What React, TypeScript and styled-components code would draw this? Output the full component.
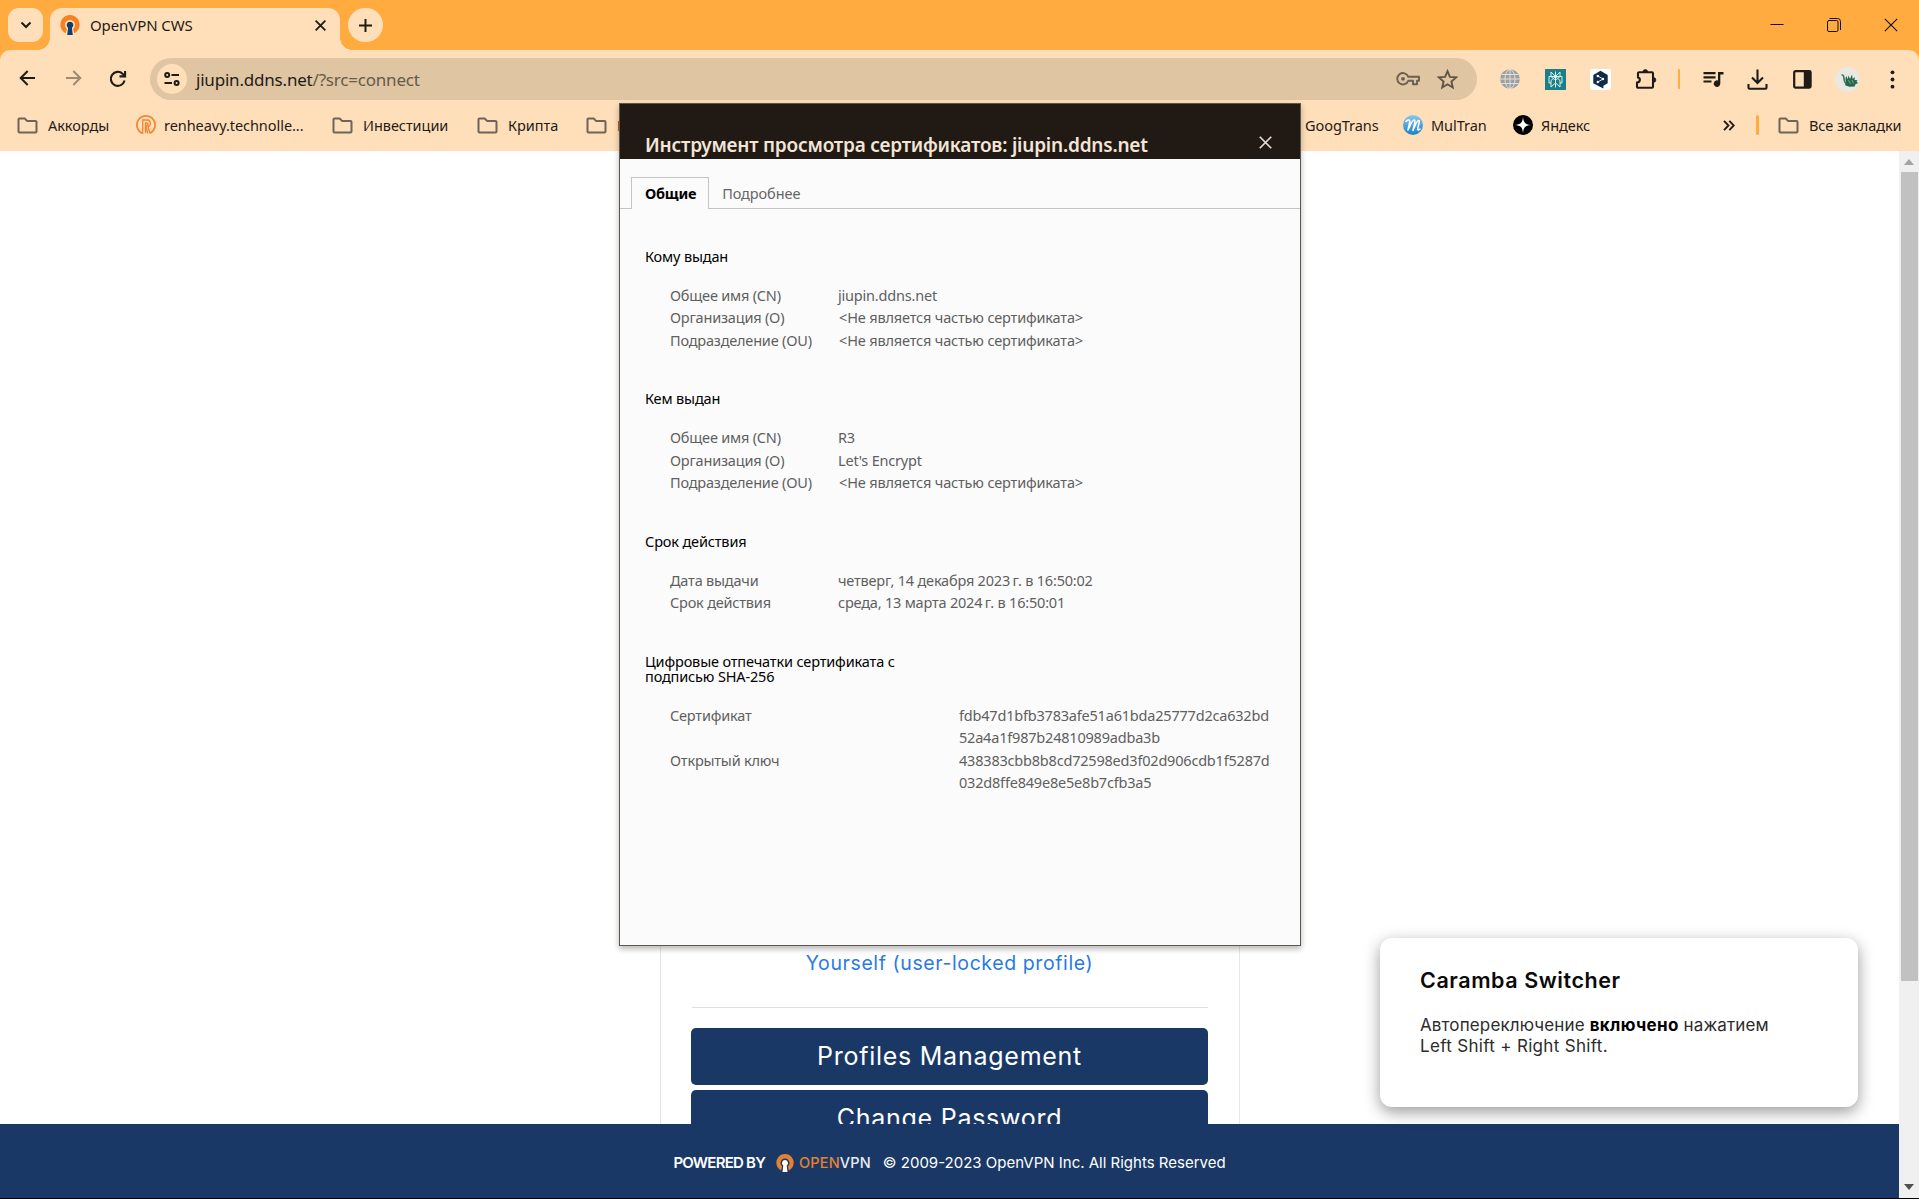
import React from "react";
import styled, { createGlobalStyle } from "styled-components";

const peach = "#ffdfb9";
const orange = "#ffab40";
const ink = "#1f1b17";
const navy = "#1a3866";

const GlobalStyle = createGlobalStyle`
  * { box-sizing: border-box; }
  body { margin: 0; background: #fff; font-family: "Noto Sans", "Open Sans", sans-serif; }
  svg { display: block; flex: none; }
`;

const Screen = styled.div`
  position: relative;
  width: 1919px;
  height: 1199px;
  overflow: hidden;
  display: flex;
  flex-direction: column;
  border-bottom: 1px solid #000;
`;

/* ---------- tab strip ---------- */

const TabStrip = styled.div`
  flex: none;
  display: flex;
  align-items: flex-start;
  height: 50px;
  padding: 8px 21px 0 8px;
  background: ${orange};
`;

const StripButton = styled.div<{ $round?: boolean }>`
  display: flex;
  align-items: center;
  justify-content: center;
  width: 35px;
  height: 34px;
  border-radius: ${(p) => (p.$round ? "17px" : "11px")};
  background: ${peach};
`;

const Tab = styled.div`
  position: relative;
  display: flex;
  align-items: center;
  width: 290px;
  height: 42px;
  margin: 0 8px 0 7px;
  padding: 0 14px 8px 10px;
  border-radius: 12px 12px 0 0;
  background: ${peach};

  &::before,
  &::after {
    content: "";
    position: absolute;
    bottom: 0;
    width: 12px;
    height: 12px;
  }
  &::before {
    left: -12px;
    background: radial-gradient(circle at 0 0, transparent 11.5px, ${peach} 12px);
  }
  &::after {
    right: -12px;
    background: radial-gradient(circle at 100% 0, transparent 11.5px, ${peach} 12px);
  }
`;

const TabTitle = styled.span`
  flex: 1;
  margin-left: 10px;
  font-size: 15px;
  letter-spacing: -0.1px;
  line-height: 20px;
  color: ${ink};
`;

const WindowButtons = styled.div`
  display: flex;
  align-items: center;
  gap: 43px;
  height: 33px;
  margin-left: auto;
`;

/* ---------- toolbar ---------- */

const ToolbarBack = styled.div`
  flex: none;
  background: ${orange};
`;

const Toolbar = styled.div`
  height: 101px;
  padding-top: 8px;
  border-radius: 10px 10px 0 0;
  background: ${peach};
`;

const NavRow = styled.div`
  display: flex;
  align-items: center;
  height: 42px;
  padding-left: 15px;
`;

const NavIcons = styled.div`
  display: flex;
  gap: 21px;
  width: 135px;
`;

const Omnibox = styled.div`
  display: flex;
  align-items: center;
  width: 1327px;
  height: 42px;
  padding: 0 19px 0 7px;
  border-radius: 21px;
  background: #dfc5a2;
`;

const SiteChip = styled.div`
  display: flex;
  align-items: center;
  justify-content: center;
  width: 30px;
  height: 30px;
  border-radius: 50%;
  background: ${peach};
`;

const Url = styled.span`
  flex: 1;
  margin-left: 9px;
  padding-top: 1px;
  font-size: 17px;
  line-height: 22px;
  letter-spacing: -0.2px;
  color: ${ink};
`;

const UrlPath = styled.span`
  color: #665a4a;
`;

const OmniIcons = styled.div`
  display: flex;
  align-items: center;
  gap: 17px;
`;

const Extensions = styled.div`
  display: flex;
  align-items: center;
  padding-left: 10.5px;
`;

const Slot = styled.div<{ $w?: number; $pad?: number }>`
  display: flex;
  align-items: center;
  justify-content: center;
  width: ${(p) => p.$w ?? 45}px;
  height: 30px;
  padding-left: ${(p) => p.$pad ?? 0}px;
`;

const Divider = styled.div<{ $w: number }>`
  width: ${(p) => p.$w}px;
  height: 20px;
  border-radius: 2px;
  background: ${orange};
`;

const BookmarkRow = styled.div`
  display: flex;
  align-items: center;
  height: 50px;
  padding-left: 17px;
`;

const Bookmark = styled.div<{ $w: number; $gap?: number }>`
  display: flex;
  align-items: center;
  flex: none;
  gap: ${(p) => p.$gap ?? 10}px;
  width: ${(p) => p.$w}px;
  font-size: 14.5px;
  line-height: 20px;
  letter-spacing: -0.05px;
  white-space: nowrap;
  color: ${ink};
`;

const BookmarkEnd = styled.div`
  display: flex;
  align-items: center;
  margin-left: 80px;
`;

/* ---------- web page ---------- */

const Content = styled.div`
  flex: 1;
  min-height: 0;
  display: flex;
`;

const Page = styled.main`
  flex: 1;
  display: flex;
  flex-direction: column;
  font-family: Inter, "Open Sans", sans-serif;
`;

const PageBody = styled.div`
  flex: 1;
  min-height: 0;
  overflow: hidden;
`;

const ProfileCard = styled.section`
  display: flex;
  flex-direction: column;
  align-items: center;
  width: 580px;
  height: 1100px;
  margin: 0 auto;
  padding: 797px 31px 0;
  border: 1px solid #e7e7e7;
  border-top: 0;
`;

const ProfileLink = styled.a`
  font-size: 19.5px;
  line-height: 30px;
  letter-spacing: 0.6px;
  color: #2a7ae4;
`;

const Rule = styled.hr`
  width: 100%;
  height: 1px;
  margin: 29px 0 20px;
  border: 0;
  background: #dfdfdf;
`;

const Action = styled.button`
  flex: none;
  width: 517px;
  height: 57px;
  margin: 0 0 5px;
  padding: 0 0 2px;
  border: 0;
  border-radius: 5px;
  background: ${navy};
  color: #fff;
  font-family: inherit;
  font-size: 25px;
  letter-spacing: 0.75px;
`;

const Footer = styled.footer`
  flex: none;
  display: flex;
  align-items: center;
  justify-content: center;
  height: 74px;
  padding-top: 3px;
  background: ${navy};
  color: #fff;
  font-size: 15px;
  line-height: 20px;
`;

const Powered = styled.span`
  margin-right: 11px;
  font-weight: 600;
  letter-spacing: -0.77px;
`;

const Brand = styled.span`
  margin: 0 12px 0 5px;
  font-size: 14.5px;
  font-weight: 500;
  letter-spacing: 0.15px;
  color: #e58132;
`;

const BrandTail = styled.span`
  color: #e8edf4;
`;

const Scrollbar = styled.div`
  display: flex;
  flex-direction: column;
  align-items: center;
  justify-content: space-between;
  width: 20px;
  padding: 8px 0 8px;
  background: #f0f0f0;
`;

const ScrollTop = styled.div`
  display: flex;
  flex-direction: column;
  align-items: center;
  gap: 7px;
`;

const ScrollThumb = styled.div`
  width: 17px;
  height: 809px;
  background: #c1c1c1;
`;

/* ---------- certificate dialog ---------- */

const Dialog = styled.section`
  position: absolute;
  left: 619px;
  top: 103px;
  width: 682px;
  height: 843px;
  border: 1px solid #5f564e;
  background: #fbfbfb;
  box-shadow: 0 3px 6px rgba(0, 0, 0, 0.28);
`;

const DialogHeader = styled.header`
  display: flex;
  align-items: flex-end;
  justify-content: space-between;
  height: 55px;
  padding: 0 28px 0 25px;
  background: #211a14;
  color: #f3e5d8;
`;

const DialogTitle = styled.h1`
  margin: 0;
  font-size: 19px;
  font-weight: 600;
  line-height: 27px;
  letter-spacing: -0.21px;
`;

const DialogClose = styled.div`
  margin-bottom: 10px;
`;

const Tabs = styled.nav`
  display: flex;
  height: 50px;
  padding: 18px 0 0 11px;
  box-shadow: inset 0 -1px #c4c4c4;
`;

const DialogTab = styled.div<{ $active?: boolean }>`
  height: 32px;
  padding: 4px 12px 0 ${(p) => (p.$active ? 13 : 12)}px;
  border: 1px solid ${(p) => (p.$active ? "#c4c4c4" : "transparent")};
  border-bottom: 0;
  background: ${(p) => (p.$active ? "#fbfbfb" : "transparent")};
  color: ${(p) => (p.$active ? "#000" : "#666")};
  font-size: 14.5px;
  line-height: 22px;
  font-weight: ${(p) => (p.$active ? 700 : 400)};
  letter-spacing: ${(p) => (p.$active ? -0.25 : -0.08)}px;
`;

const Details = styled.div`
  padding: 39.6px 0 0 25px;
  font-size: 14.5px;
  letter-spacing: -0.2px;
`;

const Section = styled.section`
  margin-bottom: 40px;
`;

const SectionTitle = styled.h2`
  width: 270px;
  margin: 0 0 20px;
  font-size: inherit;
  font-weight: 400;
  line-height: 15px;
  letter-spacing: -0.15px;
  color: #000;
`;

const Field = styled.div<{ $label: number }>`
  display: grid;
  grid-template-columns: ${(p) => p.$label}px 1fr;
  padding-left: 25px;
  line-height: 22.5px;
  color: #5f5f5f;
`;

const Absent = styled.span`
  padding-left: 1px;
  letter-spacing: -0.16px;
`;

const Hash = styled.span`
  letter-spacing: -0.2px;
`;

/* ---------- toast ---------- */

const Toast = styled.aside`
  position: absolute;
  left: 1380px;
  top: 938px;
  width: 478px;
  height: 169px;
  padding: 29px 40px;
  border-radius: 12px;
  background: #fff;
  box-shadow: 0 5px 16px rgba(0, 0, 0, 0.4);
  font-family: Inter, Roboto, sans-serif;
`;

const ToastTitle = styled.h3`
  margin: 0 0 22px;
  font-size: 21.5px;
  font-weight: 600;
  line-height: 26px;
  letter-spacing: 0.57px;
  color: #0a0a0a;
`;

const ToastText = styled.p`
  margin: 0;
  font-size: 17px;
  line-height: 21px;
  letter-spacing: 0.13px;
  white-space: nowrap;
  color: #2c2c2c;
`;

const Strong = styled.b`
  letter-spacing: 0.35px;
  color: #000;
`;

const Keys = styled.span`
  letter-spacing: 0.32px;
`;

/* ---------- icons ---------- */

const Folder = () => (
  <svg width="21" height="17" viewBox="0 0 21 17" fill="none" stroke="#6b655d" strokeWidth="2" strokeLinejoin="round">
    <path d="M1.5 14.5v-12a1 1 0 0 1 1-1h5.2l2.3 2.4h8.5a1 1 0 0 1 1 1v9.6a1 1 0 0 1-1 1h-16a1 1 0 0 1-1-1z" />
  </svg>
);

const VpnMark = ({ size, ring, hole }: { size: number; ring: string; hole: string }) => (
  <svg width={size} height={size} viewBox="0 0 20 20">
    <path d="M5.6 18.2A9.6 9.6 0 1 1 14.4 18.2L13.1 13.9A5 5 0 1 0 6.9 13.9z" fill={ring} />
    <path d="M10 6.7a3.4 3.4 0 0 0-1.9 6.2L7.2 20h5.6l-.9-7.1A3.4 3.4 0 0 0 10 6.7z" fill={hole} />
  </svg>
);

const BackIcon = ({ color, flip }: { color: string; flip?: boolean }) => (
  <svg width="25" height="20" viewBox="0 0 25 20" fill="none" stroke={color} strokeWidth="2">
    <g transform={flip ? "translate(25 0) scale(-1 1)" : undefined}>
      <path d="M20 10H6M12.7 3 5.7 10l7 7" />
    </g>
  </svg>
);

const ReloadIcon = () => (
  <svg width="22" height="22" viewBox="0 0 22 22" fill="none" stroke={ink} strokeWidth="2.1">
    <path d="M17.6 12.6a7 7 0 1 1-1.8-6.7l1.8 1.9M18.1 3v5.4h-5.6" />
  </svg>
);

const TuneIcon = () => (
  <svg width="16" height="14" viewBox="0 0 16 14" fill="none" stroke={ink} strokeWidth="2">
    <circle cx="3.2" cy="3" r="2" />
    <path d="M7.5 3H15M0.5 11H8" />
    <circle cx="12.6" cy="11" r="2" />
  </svg>
);

const KeyIcon = () => (
  <svg width="24" height="14" viewBox="0 0 24 14" fill="none" stroke="#6b5f50" strokeWidth="1.9" strokeLinejoin="round">
    <path d="M12.3 4.8H23v3.9h-2v3.6h-4V8.7h-4.7a5.7 5.7 0 1 1 0-3.9z" />
    <circle cx="7" cy="6.8" r="1.9" fill="#6b5f50" stroke="none" />
  </svg>
);

const StarIcon = () => (
  <svg width="21" height="21" viewBox="0 0 21 21" fill="none" stroke="#5f5548" strokeWidth="1.9">
    <path d="m10.5 2.2 2.4 5.700 6.200.5-4.700 4.100 1.400 6-5.300-3.200-5.300 3.200 1.400-6-4.700-4.100 6.200-.5z" />
  </svg>
);

const GlobeIcon = () => (
  <svg width="20" height="20" viewBox="0 0 20 20" fill="none" stroke="#eadfce" strokeWidth="1">
    <circle cx="10" cy="10" r="9.8" fill="#98a0a8" stroke="none" />
    <ellipse cx="10" cy="10" rx="5" ry="9.5" />
    <path d="M10 0v20M0 10h20M1.500 5.500h17M1.500 14.500h17" />
  </svg>
);

const PerplexityIcon = () => (
  <svg width="21" height="21" viewBox="0 0 21 21" fill="none" stroke="#d8f2f0" strokeWidth="1">
    <path d="M0 0h21v21H0z" fill="#1c7e86" stroke="none" />
    <path d="M10.5 2.5v16M6 3v4.5l4.5 3.7L15 7.500V3l-4.500 4.500zM4 7.500h13v6.500h-2v4l-4.500-4L6 18v-4H4zM6 14v-2.500l4.500-4 4.500 4V14" />
  </svg>
);

const DeepLIcon = () => (
  <svg width="21" height="21" viewBox="0 0 21 21">
    <rect width="21" height="21" rx="2" fill="#fff" />
    <path d="M10.500 1.800 17.700 6v8.300l-4.300 2.500v2.600l-3-1.300-7.100-3.900V6z" fill="#0f2b46" />
    <path d="m7.800 7 5.200 3-5.200 3" stroke="#fff" strokeWidth=".9" fill="none" />
    <g fill="#fff">
      <circle cx="7.800" cy="7" r="1.200" />
      <circle cx="13" cy="10" r="1.200" />
      <circle cx="7.800" cy="13" r="1.200" />
    </g>
  </svg>
);

const PuzzleIcon = () => (
  <svg width="22" height="22" viewBox="0 0 22 22">
    <path
      d="M3 5.200a1 1 0 0 1 1-1h13a1 1 0 0 1 1 1v13.600a1 1 0 0 1-1 1H3a1 1 0 0 1-1-1v-4.200c3.600-.4 3.600-4.600 1-5.100z"
      fill="none"
      stroke={ink}
      strokeWidth="2.100"
    />
    <path d="M7.900 4a2.400 2.400 0 0 1 4.800 0zM18.500 9.600a2.400 2.400 0 0 1 0 4.800z" fill={ink} stroke={ink} strokeWidth=".7" />
  </svg>
);

const MusicIcon = () => (
  <svg width="21" height="18" viewBox="0 0 21 18" fill={ink}>
    <path d="M.5 2h12v2.200h-12zM.5 6.200h12v2.200h-12zM.5 10.400h8v2.200h-8z" />
    <path d="M15 2h5.500v2.400h-3.200v9.200a3.300 3.300 0 1 1-2.300-3.100z" />
  </svg>
);

const DownloadIcon = () => (
  <svg width="21" height="21" viewBox="0 0 21 21" fill="none" stroke={ink} strokeWidth="2.100">
    <path d="M10.500.5v13M5 8.400l5.500 5.500L16 8.400M1.500 15v3.700a1 1 0 0 0 1 1h16a1 1 0 0 0 1-1V15" />
  </svg>
);

const PanelIcon = () => (
  <svg width="19" height="19" viewBox="0 0 19 19">
    <rect x="1.200" y="1.200" width="16.400" height="16.400" rx="1.300" fill="none" stroke={ink} strokeWidth="2.200" />
    <path d="M10.800 1h6.500v17h-6.500z" fill={ink} />
  </svg>
);

const AvatarIcon = () => (
  <svg width="25" height="25" viewBox="0 0 25 25">
    <circle cx="12.500" cy="12.500" r="12.300" fill="#e9e8e4" />
    <path d="M6.500 8c2.500-.5 2.300 2 2.600 4.500.3 2.500 2 4.500 4.500 5.500" fill="none" stroke="#3c7a5c" strokeWidth="1.600" />
    <path
      d="M11 14.500c-.8-1.800-.8-3.600.4-5.500l1.200 3.200 1-3.700 1.400 3.400 2-4.400.6 4.200 2.200-1.500-.2 2.800 3 .2-1 1.600 1.600 1.400-2.600.8-1 2.600-5.200.2-4.400-1.600z"
      fill="#27694a"
    />
    <path d="m13.500 13 2 4m1.500-4 1.500 3.500" stroke="#8db39c" strokeWidth=".8" />
  </svg>
);

const DotsIcon = () => (
  <svg width="5" height="19" viewBox="0 0 5 19" fill={ink}>
    <circle cx="2.500" cy="2.300" r="1.900" />
    <circle cx="2.500" cy="9.500" r="1.900" />
    <circle cx="2.500" cy="16.700" r="1.900" />
  </svg>
);

const RIcon = () => (
  <svg width="20" height="20" viewBox="0 0 20 20" fill="none" stroke="#f5852e" strokeWidth="1.700">
    <path d="M6 18.200a9.100 9.100 0 1 1 8 0" />
    <path d="M6.700 19V5h4.200a3.300 3.300 0 0 1 1 6.500l2.100 6.800M9.500 18V8h1.300a1 1 0 0 1 0 2.500H9.600M10 11.500l1.800 7" strokeWidth="1.300" />
  </svg>
);

const MultranIcon = () => (
  <svg width="20" height="20" viewBox="0 0 20 20">
    <defs>
      <linearGradient id="mt" x1="0" y1="0" x2="0" y2="1">
        <stop offset="0" stopColor="#8cc8ee" />
        <stop offset="1" stopColor="#1583c8" />
      </linearGradient>
    </defs>
    <circle cx="10" cy="10" r="10" fill="url(#mt)" />
    <path
      d="M3 6.500c1.500-1.500 3.300-2 3.800-.8.300 1-1.300 6-1.800 9.300M6 13c1.800-4.500 4-8.500 5.600-8 1.400.6-.8 6-1.600 10.500M11 13c1.800-4.500 3.500-8 5-7.500 1.300.6-1.500 6.500-1.300 8.800.2 1 1.300.7 2.300-.3"
      fill="none"
      stroke="#fff"
      strokeWidth="1.600"
      strokeLinecap="round"
    />
  </svg>
);

const YandexIcon = () => (
  <svg width="20" height="20" viewBox="0 0 20 20">
    <circle cx="10" cy="10" r="10" fill="#000" />
    <path d="M10 1.800c.5 6 2.200 7.700 8.200 8.200-6 .5-7.700 2.200-8.200 8.200-.5-6-2.200-7.700-8.200-8.200 6-.5 7.700-2.200 8.200-8.200z" fill="#fff" />
  </svg>
);

const CrossIcon = ({ size, color, width }: { size: number; color: string; width: number }) => (
  <svg width={size} height={size} viewBox="0 0 12 12" stroke={color} strokeWidth={width}>
    <path d="m.7.7 10.600 10.600M11.300.7.7 11.300" />
  </svg>
);

/* ---------- data ---------- */

const absent = "<Не является частью сертификата>";

const sections: { title: string; fields: [string, string | null][] }[] = [
  {
    title: "Кому выдан",
    fields: [
      ["Общее имя (CN)", "jiupin.ddns.net"],
      ["Организация (O)", null],
      ["Подразделение (OU)", null],
    ],
  },
  {
    title: "Кем выдан",
    fields: [
      ["Общее имя (CN)", "R3"],
      ["Организация (O)", "Let's Encrypt"],
      ["Подразделение (OU)", null],
    ],
  },
  {
    title: "Срок действия",
    fields: [
      ["Дата выдачи", "четверг, 14 декабря 2023\u202fг. в 16:50:02"],
      ["Срок действия", "среда, 13 марта 2024\u202fг. в 16:50:01"],
    ],
  },
];

const hashes: [string, string, string][] = [
  ["Сертификат", "fdb47d1bfb3783afe51a61bda25777d2ca632bd", "52a4a1f987b24810989adba3b"],
  ["Открытый ключ", "438383cbb8b8cd72598ed3f02d906cdb1f5287d", "032d8ffe849e8e5e8b7cfb3a5"],
];

export default function App() {
  return (
    <Screen>
      <GlobalStyle />
      <TabStrip>
        <StripButton>
          <svg width="12" height="8" viewBox="0 0 12 8" fill="none" stroke={ink} strokeWidth="2">
            <path d="m1.500 1.500 4.500 4.500 4.500-4.500" />
          </svg>
        </StripButton>
        <Tab>
          <VpnMark size={20} ring="#f58220" hole="#123d73" />
          <TabTitle>OpenVPN CWS</TabTitle>
          <CrossIcon size={11} color={ink} width={2} />
        </Tab>
        <StripButton $round>
          <svg width="13" height="13" viewBox="0 0 13 13" stroke={ink} strokeWidth="2">
            <path d="M6.500 0v13M0 6.500h13" />
          </svg>
        </StripButton>
        <WindowButtons>
          <svg width="14" height="14" viewBox="0 0 14 14" stroke="#111">
            <path d="M0.500 6.500h13" />
          </svg>
          <svg width="14" height="14" viewBox="0 0 14 14" fill="none" stroke="#111">
            <rect x=".5" y="2.500" width="10.500" height="11" rx="1.500" />
            <path d="M2.500.5H10.500a3 3 0 0 1 3 3v8.500" />
          </svg>
          <CrossIcon size={14} color="#111" width={0.95} />
        </WindowButtons>
      </TabStrip>

      <ToolbarBack>
        <Toolbar>
          <NavRow>
            <NavIcons>
              <BackIcon color={ink} />
              <BackIcon color="#a08b72" flip />
              <ReloadIcon />
            </NavIcons>
            <Omnibox>
              <SiteChip>
                <TuneIcon />
              </SiteChip>
              <Url>
                jiupin.ddns.net<UrlPath>/?src=connect</UrlPath>
              </Url>
              <OmniIcons>
                <KeyIcon />
                <StarIcon />
              </OmniIcons>
            </Omnibox>
            <Extensions>
              <Slot><GlobeIcon /></Slot>
              <Slot><PerplexityIcon /></Slot>
              <Slot><DeepLIcon /></Slot>
              <Slot $pad={2}><PuzzleIcon /></Slot>
              <Slot $w={22}><Divider $w={2} /></Slot>
              <Slot $pad={2}><MusicIcon /></Slot>
              <Slot><DownloadIcon /></Slot>
              <Slot><PanelIcon /></Slot>
              <Slot><AvatarIcon /></Slot>
              <Slot><DotsIcon /></Slot>
            </Extensions>
          </NavRow>
          <BookmarkRow>
            <Bookmark $w={119}><Folder />Аккорды</Bookmark>
            <Bookmark $w={196} $gap={8}><RIcon />renheavy.technolle...</Bookmark>
            <Bookmark $w={145}><Folder />Инвестиции</Bookmark>
            <Bookmark $w={109}><Folder />Крипта</Bookmark>
            <Bookmark $w={719}><Folder />К</Bookmark>
            <Bookmark $w={98}>GoogTrans</Bookmark>
            <Bookmark $w={110} $gap={8}><MultranIcon />MulTran</Bookmark>
            <Bookmark $w={129} $gap={8}><YandexIcon />Яндекс</Bookmark>
            <BookmarkEnd>
              <Slot $w={14}>
                <svg width="12" height="11" viewBox="0 0 12 11" fill="none" stroke={ink} strokeWidth="1.900">
                  <path d="m1 .8 4.500 4.700L1 10.200M6.300.8l4.500 4.700-4.500 4.700" />
                </svg>
              </Slot>
              <Slot $w={42}><Divider $w={3} /></Slot>
              <Bookmark $w={140}><Folder />Все закладки</Bookmark>
            </BookmarkEnd>
          </BookmarkRow>
        </Toolbar>
      </ToolbarBack>

      <Content>
        <Page>
          <PageBody>
            <ProfileCard>
              <ProfileLink>Yourself (user-locked profile)</ProfileLink>
              <Rule />
              <Action>Profiles Management</Action>
              <Action>Change Password</Action>
            </ProfileCard>
          </PageBody>
          <Footer>
            <Powered>POWERED BY</Powered>
            <VpnMark size={18} ring="#e58132" hole="#fff" />
            <Brand>OPEN<BrandTail>VPN</BrandTail></Brand>
            <span>© 2009-2023 OpenVPN Inc. All Rights Reserved</span>
          </Footer>
        </Page>
        <Scrollbar>
          <ScrollTop>
            <svg width="10" height="6" viewBox="0 0 10 6" fill="#a3a3a3"><path d="M0 6 5 0l5 6z" /></svg>
            <ScrollThumb />
          </ScrollTop>
          <svg width="10" height="6" viewBox="0 0 10 6" fill="#505050"><path d="m0 0 5 6 5-6z" /></svg>
        </Scrollbar>
      </Content>

      <Dialog>
        <DialogHeader>
          <DialogTitle>Инструмент просмотра сертификатов: jiupin.ddns.net</DialogTitle>
          <DialogClose><CrossIcon size={13} color="#e6dccf" width={1.6} /></DialogClose>
        </DialogHeader>
        <Tabs>
          <DialogTab $active>Общие</DialogTab>
          <DialogTab>Подробнее</DialogTab>
        </Tabs>
        <Details>
          {sections.map((s) => (
            <Section key={s.title}>
              <SectionTitle>{s.title}</SectionTitle>
              {s.fields.map(([label, value]) => (
                <Field key={label} $label={168}>
                  <span>{label}</span>
                  {value === null ? <Absent>{absent}</Absent> : <span>{value}</span>}
                </Field>
              ))}
            </Section>
          ))}
          <Section>
            <SectionTitle>Цифровые отпечатки сертификата с подписью SHA-256</SectionTitle>
            {hashes.map(([label, a, b]) => (
              <Field key={label} $label={289}>
                <span>{label}</span>
                <Hash>{a}<br />{b}</Hash>
              </Field>
            ))}
          </Section>
        </Details>
      </Dialog>

      <Toast>
        <ToastTitle>Caramba Switcher</ToastTitle>
        <ToastText>
          Автопереключение <Strong>включено</Strong> нажатием<br />
          <Keys>Left Shift + Right Shift.</Keys>
        </ToastText>
      </Toast>
    </Screen>
  );
}
